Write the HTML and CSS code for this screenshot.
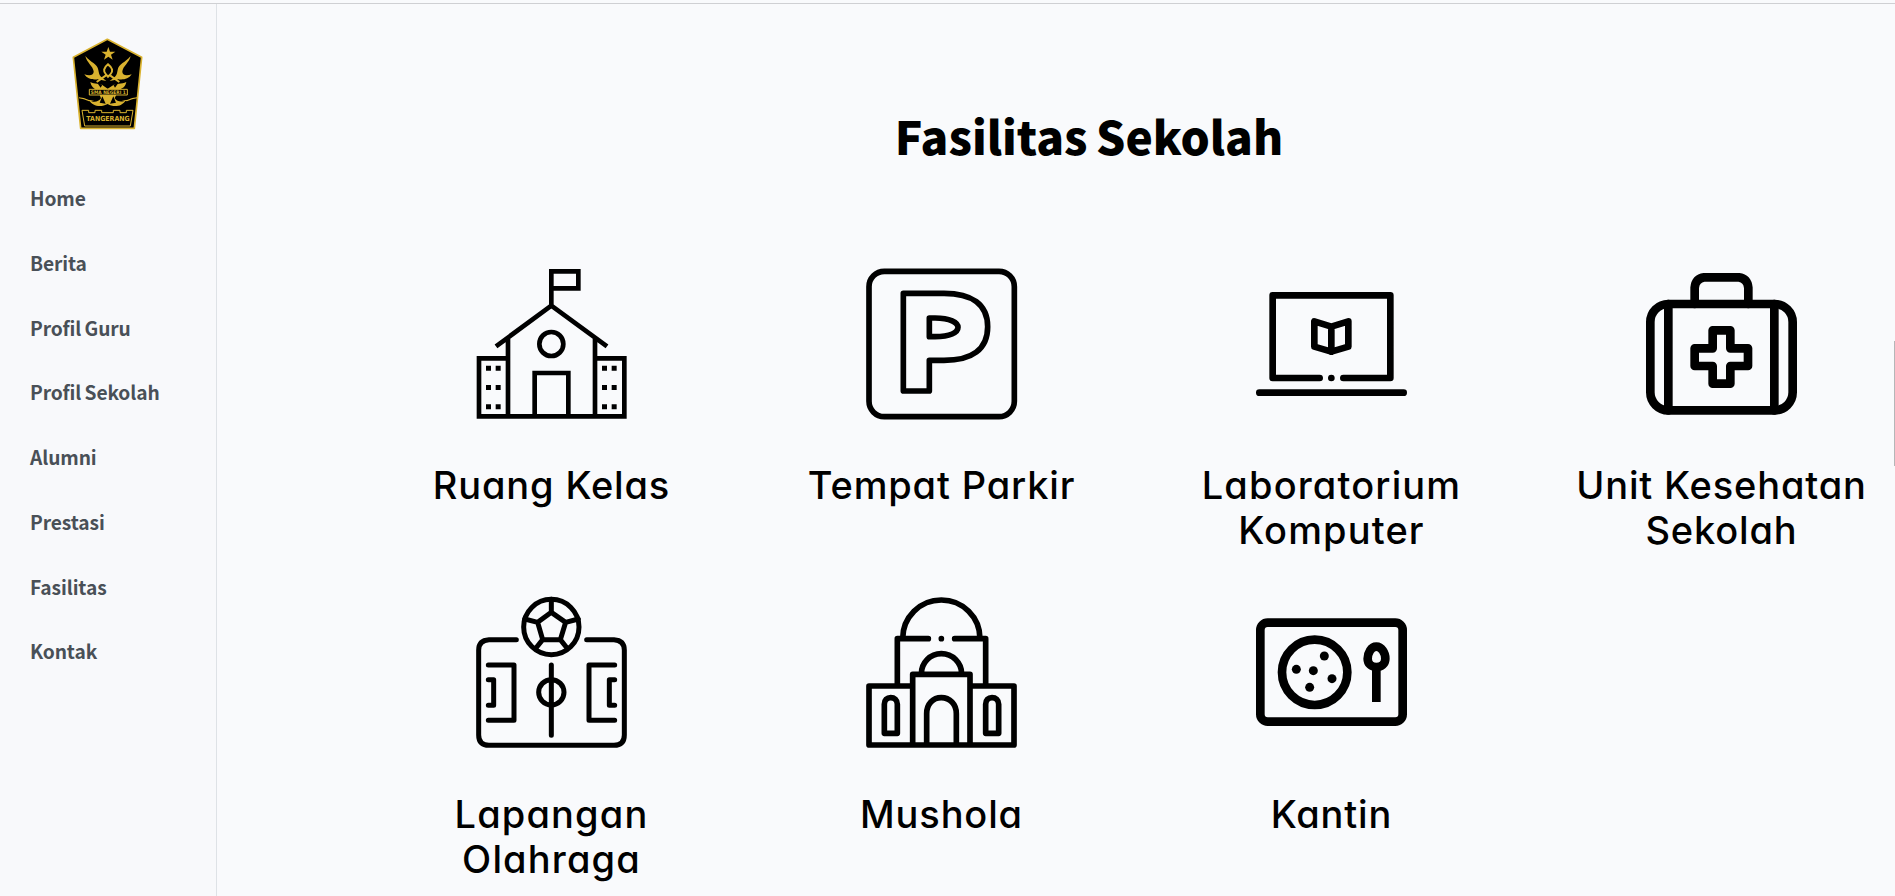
FILE: index.html
```html
<!DOCTYPE html>
<html lang="id">
<head>
<meta charset="utf-8">
<title>Fasilitas Sekolah</title>
<link rel="stylesheet" href="styles.css">
</head>
<body>
<div class="page">
  <aside class="sidebar">
    <svg class="logo" viewBox="0 0 300 315">
      <path d="M142 28 245 82 223 295H62L40 82Z" fill="#000" stroke="#d9b22f" stroke-width="5" stroke-linejoin="round"/>
      <g fill="#d9b22f">
        <path d="M145 51l5 14h16l-13 9 5 15-13-9-13 9 5-15-13-9h16z"/>
        <path id="horn" d="M76 78C80 98 99 108 101 124c1 12-12 15-28 9 9 14 24 17 40 15l26 5-16-13c-6-5-6-12-8-20C112 101 92 98 76 78z"/>
        <use href="#horn" transform="matrix(-1 0 0 1 288 0)"/>
        <path d="M91 156c12 7 30 3 39 11l13 9 14-9c11-8 28-4 42-11-4 21-18 18-26 29l-9 20c9 11 22 13 35 4-15 23-39 23-56 13-18 10-45 9-56-12 14 9 28 6 36-5l-8-20c-9-10-20-9-24-29z"/>
        <path d="M57 202q14 1 30 8l16 1-16 3q-16-8-30-9zM231 202q-14 1-30 8l-16 1 16 3q16-8 30-9z"/>
      </g>
      <path d="M144 103q-20 16-6 30l6 7 7-7q14-14-7-30zM138 136 110 156M150 136 178 156" fill="none" stroke="#d9b22f" stroke-width="6"/>
      <path d="M112 159l15 5-5 9zM175 159l-15 5 5 9zM127 199l10 22-18-3zM160 199l-10 22 18-3zM143 166l-10-4 10-3 10 3z" fill="#000"/>
      <path d="M88 178H202V195H88Z" fill="#000" stroke="#d9b22f" stroke-width="3"/>
      <text class="crest-text" x="145" y="192" font-size="14" textLength="105" lengthAdjust="spacingAndGlyphs">SMA NEGERI 1</text>
      <path d="M66 241H86V248H105V241H125V248H160V241H180V248H199V241H219L211 288H74Z" fill="#000" stroke="#d9b22f" stroke-width="3"/>
      <text class="crest-text" x="144" y="273" font-size="21" textLength="130" lengthAdjust="spacingAndGlyphs">TANGERANG</text>
    </svg>
    <nav class="menu">
      <a>Home</a><a>Berita</a><a>Profil Guru</a><a>Profil Sekolah</a><a>Alumni</a><a>Prestasi</a><a>Fasilitas</a><a>Kontak</a>
    </nav>
  </aside>
  <main class="content">
    <h1 class="title">Fasilitas Sekolah</h1>
    <div class="grid">
      <div class="card">
        <svg class="icon" viewBox="0 0 510 510" stroke-width="14">
          <path d="M259 138V34H340V85H259M93 259 259 137 426 259M129 235V469M390 235V469M129 295H42V469H478V295H390M209 469V339H310V469"/>
          <circle cx="259" cy="252" r="36"/>
          <path class="solid" d="M63 317h15v15h-15zM92 317h15v15h-15zM63 375h15v15h-15zM92 375h15v15h-15zM63 433h15v15h-15zM92 433h15v15h-15zM411 317h15v15h-15zM440 317h15v15h-15zM411 375h15v15h-15zM440 375h15v15h-15zM411 433h15v15h-15zM440 433h15v15h-15z"/>
        </svg>
        <p class="label">Ruang Kelas</p>
      </div>
      <div class="card">
        <svg class="icon round" viewBox="0 0 510 510" stroke-width="17">
          <rect x="42" y="34" width="436" height="436" rx="46"/>
          <path d="M145 100H267C350 100 398 133 398 200C398 268 351 301 267 301H223V393H145ZM223 174H240C285 174 309 187 309 202C309 218 285 230 240 230H223Z"/>
        </svg>
        <p class="label">Tempat Parkir</p>
      </div>
      <div class="card">
        <svg class="icon round" viewBox="0 0 510 510" stroke-width="20">
          <path d="M224 354H83V106H436V354H295M43 398H476M259 354h.1M259 200 208 184V260L259 275 310 260V184ZM259 200V275"/>
        </svg>
        <p class="label wide">Laboratorium Komputer</p>
      </div>
      <div class="card">
        <svg class="icon round" viewBox="0 0 510 510" stroke-width="26">
          <rect x="46" y="132" width="427" height="319" rx="54"/>
          <path d="M100 132V451M418 132V451M179 132V83Q182 55 207 52H312Q337 55 340 83V132M233 211H286V265H339V318H286V371H233V318H179V265H233Z"/>
        </svg>
        <p class="label">Unit Kesehatan Sekolah</p>
      </div>
      <div class="card">
        <svg class="icon round" viewBox="0 0 510 510" stroke-width="15">
          <path d="M154 152H72Q41 154 41 183V438Q41 469 72 469H447Q478 469 478 438V183Q478 154 447 152H365"/>
          <circle cx="259" cy="114" r="83"/><circle cx="259" cy="310" r="38"/>
          <path d="M259 31V70L218 100 233 152H286L302 100 259 70M218 100 179 90M302 100 340 90M233 152 213 177M286 152 306 177M259 228V439M70 228H147V394H70M70 272H86V349H70M449 228H372V394H449M449 272H433V349H449"/>
        </svg>
        <p class="label wide">Lapangan Olahraga</p>
      </div>
      <div class="card">
        <svg class="icon round" viewBox="0 0 510 510" stroke-width="17">
          <path d="M143 149C143 84 195 33 259 33S375 84 375 149M220 149H127V291M299 149H392V291M259 149h.1M199 255C199 221 226 194 259 194S320 221 320 255M173 467V256H345V467M173 291H42V468H477V291H345M215 467V374C215 345 234 326 259 326S304 345 304 374V467M88 433V346C88 333 96 326 107 326S127 333 127 346V433ZM392 433V346C392 333 400 326 411 326S431 333 431 346V433Z"/>
        </svg>
        <p class="label">Mushola</p>
      </div>
      <div class="card">
        <svg class="icon" viewBox="0 0 510 510" stroke-width="26">
          <rect x="46" y="101" width="427" height="297" rx="22"/>
          <circle cx="209" cy="250" r="98"/>
          <path d="M394 173C378 173 368 192 368 209C368 224 379 234 394 234S421 224 421 209C421 192 410 173 394 173ZM394 234V339"/>
          <g class="solid"><circle cx="238" cy="201" r="13.500"/><circle cx="154" cy="241" r="13.500"/><circle cx="205" cy="245" r="13.500"/><circle cx="261" cy="269" r="13.500"/><circle cx="194" cy="295" r="13.500"/></g>
        </svg>
        <p class="label">Kantin</p>
      </div>
    </div>
  </main>
  <div class="scrollbar"></div>
</div>
</body>
</html>
```
FILE: styles.css
```css
* { box-sizing: border-box; }
body { margin: 0; background: #f9fafc; overflow: hidden; }
.page { position: relative; display: flex; height: 896px; overflow: hidden; padding-top: 4px; background: linear-gradient(#cfd0d3, #cfd0d3) 0 3px / 100% 1px no-repeat; }
.sidebar { flex: none; width: 217px; border-right: 1px solid #dee2e6; padding-top: 26px; background: #f8f9fb; }
.logo { display: block; width: 100px; height: 105px; margin-left: 60px; }
.crest-text { fill: #d9b22f; font-family: "DejaVu Sans", sans-serif; font-weight: 700; text-anchor: middle; }
.menu { display: flex; flex-direction: column; padding: 31px 0 0 30px; }
.menu a { height: 64.750px; font: 700 19.200px/64.750px "Noto Sans CJK JP", sans-serif; word-spacing: -1px; letter-spacing: -0.100px; color: #495057; white-space: nowrap; }
.content { flex: 1; padding-left: 139.500px; }
.title { width: 1465px; margin: 95px 0 0; text-align: center; font: 900 46px/72px "Noto Sans CJK JP", sans-serif; word-spacing: -2px; color: #000; }
.grid { display: grid; grid-template-columns: repeat(4, 390px); grid-auto-rows: 329px; margin-top: 89px; }
.card { display: flex; flex-direction: column; align-items: center; }
.icon { width: 170px; height: 170px; margin-left: -3px; fill: none; stroke: #000; }
.round { stroke-linecap: round; stroke-linejoin: round; }
.solid { fill: #000; stroke: none; }
.label { width: 310px; margin: 32.500px 0 0; text-align: center; font: 500 38px/45.500px Inter, sans-serif; font-feature-settings: "cv11"; letter-spacing: 0.850px; color: #000; }
.wide { letter-spacing: 1.150px; }
.scrollbar { position: absolute; top: 341px; right: 0; width: 1px; height: 125px; background: #b5b6b8; }
```
